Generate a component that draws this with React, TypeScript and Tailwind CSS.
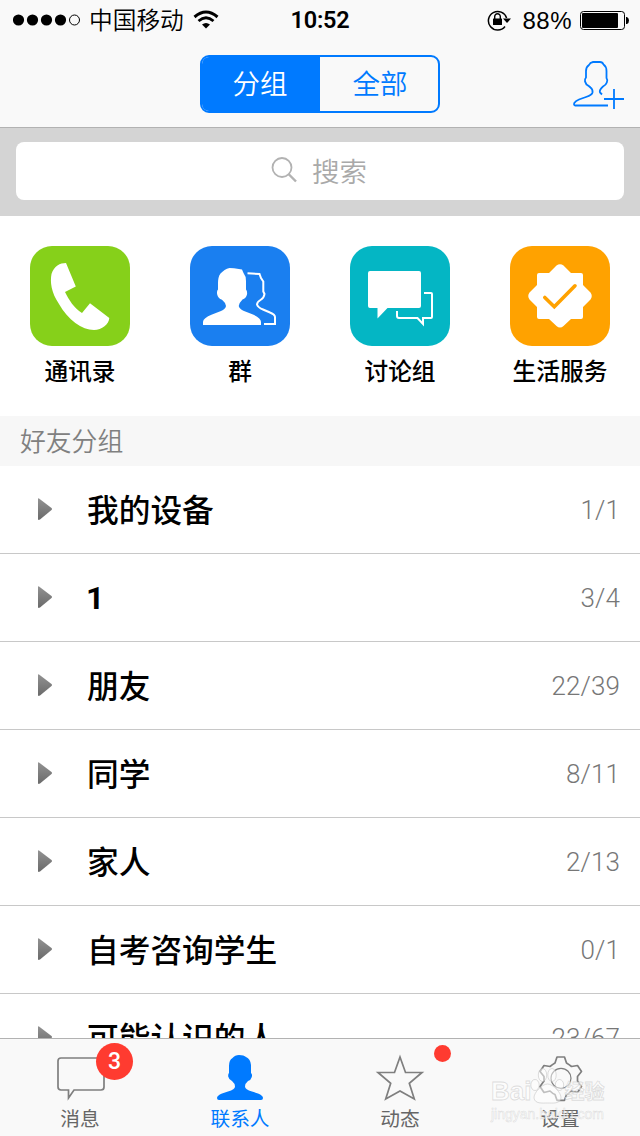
import React from "react";

const groups = [
  { name: "我的设备", count: "1/1" },
  { name: "1", count: "3/4" },
  { name: "朋友", count: "22/39" },
  { name: "同学", count: "8/11" },
  { name: "家人", count: "2/13" },
  { name: "自考咨询学生", count: "0/1" },
  { name: "可能认识的人", count: "23/67" },
];

function PhoneIcon() {
  return (
    <svg width="100" height="100" viewBox="0 0 100 100" fill="#fff">
      <path d="M36 17 L45.800 40.500 L35 46 C39 54 44 62 52 67 L60 57.300 L79.300 72 C79 78 72 84 64 84 C52 84 38 74 29 58 C21 46 20 36 21.500 28 C24 20 30 17 36 17Z" />
    </svg>
  );
}

function PeopleIcon() {
  return (
    <svg width="100" height="100" viewBox="0 0 100 100" fill="#fff">
      <path d="M52 23.500 L44 22.200 L39.500 22 C36 22.500 33 25 30.500 27.500 C28.500 30 28 34 28 37 V43.500 Q26.500 45 27.200 48.500 Q28 52.500 32 53.700 Q35.500 56.500 36 60 Q35.500 63 31 65 L22 68.500 Q13 72 13 76 V79 H71 V76 Q71 72 63 68.500 L54 65 Q49.500 63 48.700 60 Q49 57 52.500 53.500 Q56 52.500 57 48.500 Q57.500 45 56 43.500 V35 Q56 30 53.500 27Z" />
      <path
        d="M57.500 27.200 L69.500 28 L71 32 L73.300 35.500 V45.500 L74.500 48 Q74 52 70.500 54 Q67 56 67 58.500 Q68 61.500 73 63.500 L80 66.500 Q85 68.500 85 71 V78 H74"
        fill="none"
        stroke="#fff"
        strokeWidth="2"
      />
    </svg>
  );
}

function BubblesIcon() {
  return (
    <svg width="100" height="100" viewBox="0 0 100 100" fill="#fff">
      <path d="M20 25 H69 Q71 25 71 27 V60 Q71 62 69 62 H37.500 L27.500 72.500 V62 H20 Q18 62 18 60 V27 Q18 25 20 25Z" />
      <path
        d="M74 47 H81 Q82 47 82 48 V71 Q82 72 81 72 H73 V78 L67.500 72 H49 Q47 72 47 70 V65"
        fill="none"
        stroke="#fff"
        strokeWidth="2"
      />
    </svg>
  );
}

function BadgeCheckIcon() {
  return (
    <svg width="100" height="100" viewBox="0 0 100 100">
      <path
        d="M39 27 L46.500 19.500 Q50 17 53.500 19.500 L61 27 H71 Q73 27 73 29 V39 L80.500 46.500 Q83 50 80.500 53.500 L73 61 V71 Q73 73 71 73 H61 L53.500 80 Q50 83 46.500 80 L39 73 H29 Q27 73 27 71 V61 L19.500 53.500 Q17 50 19.500 46.500 L27 39 V29 Q27 27 29 27Z"
        fill="#fff"
      />
      <path d="M34.800 51.500 L44.300 60.700 L65 39.800" fill="none" stroke="#ffa200" strokeWidth="3.600" strokeLinecap="round" />
    </svg>
  );
}

const shortcuts = [
  { label: "通讯录", bg: "bg-[#86d01a]", icon: <PhoneIcon /> },
  { label: "群", bg: "bg-[#1a7ff0]", icon: <PeopleIcon /> },
  { label: "讨论组", bg: "bg-[#04b6c4]", icon: <BubblesIcon /> },
  { label: "生活服务", bg: "bg-[#ffa200]", icon: <BadgeCheckIcon /> },
];

function StatusBar() {
  return (
    <div className="grid h-10 grid-cols-[220px_1fr_220px] items-center text-[24px] leading-none text-black">
      <div className="flex items-center pl-[13px]">
        <svg className="shrink-0" width="68" height="12" viewBox="0 0 68 12">
          <circle cx="5.500" cy="6" r="5.600" />
          <circle cx="19.500" cy="6" r="5.600" />
          <circle cx="33.500" cy="6" r="5.600" />
          <circle cx="47.500" cy="6" r="5.600" />
          <circle cx="61.500" cy="6" r="5" fill="none" stroke="#000" strokeWidth="1" />
        </svg>
        <span className="ml-[8px] whitespace-nowrap pt-[4px] font-['Liberation_Sans','Noto_Sans_CJK_SC_DemiLight','Noto_Sans_CJK_SC',sans-serif] text-[23.700px] font-[350]">中国移动</span>
        <svg className="ml-[9px] shrink-0" width="26" height="20" viewBox="0 0 26 20" fill="none" stroke="#000">
          <path d="M1.500 7 Q13 -3 24.500 7" strokeWidth="3" />
          <path d="M5.500 11 Q13 4.500 20.500 11" strokeWidth="2.800" />
          <path d="M9 14.500 Q13 11.500 17 14.500 L13 18.500Z" fill="#000" stroke="none" />
        </svg>
      </div>
      <span className="pt-[2px] text-center font-['Roboto',sans-serif] text-[23.500px] font-semibold tracking-[-0.200px]">10:52</span>
      <div className="flex items-center justify-end pr-[11px]">
        <svg className="shrink-0" width="25" height="22" viewBox="0 0 25 22">
          <path d="M18 17.500 A9.300 9.300 0 1 1 19.600 9" fill="none" stroke="#000" strokeWidth="1.500" />
          <path d="M16 9.500 H24 L20 14Z" />
          <rect x="6" y="9.500" width="9" height="6.500" rx="0.500" />
          <path d="M7.700 10 V7.500 a2.800 2.800 0 0 1 5.600 0 V10" fill="none" stroke="#000" strokeWidth="1.400" />
        </svg>
        <span className="ml-[10px] pt-[2px] text-[24px] tracking-[0.500px]">88%</span>
        <svg className="ml-[8px] shrink-0" width="49" height="20" viewBox="0 0 49 20">
          <rect x="0.500" y="1.500" width="44" height="18" rx="3" fill="none" stroke="#000" />
          <rect x="2" y="3" width="36" height="15" rx="1" />
          <path d="M46 7 H47 Q49 8 49 10.500 Q49 13 47 14 H46Z" />
        </svg>
      </div>
    </div>
  );
}

export default function App() {
  return (
    <div className="flex h-[1136px] w-[640px] flex-col overflow-hidden bg-white font-['Liberation_Sans','Noto_Sans_CJK_SC',sans-serif]">
      <header className="h-[128px] shrink-0 border-b border-[#b2b2b2] bg-[#f9f9f9]">
        <StatusBar />
        <div className="grid grid-cols-[200px_240px_200px] pt-[15px]">
          <div />
          <div className="flex h-[58px] overflow-hidden rounded-[9px] border-2 border-[#007aff] bg-[#f9f9f9] font-['Liberation_Sans','Noto_Sans_CJK_SC_DemiLight','Noto_Sans_CJK_SC',sans-serif] text-[27.500px] font-[350] leading-[56px]">
            <button className="w-[118px] bg-[#007aff] pr-[2px] text-white">分组</button>
            <button className="flex-1 pl-[2px] text-[#007aff]">全部</button>
          </div>
          <svg className="ml-[132px] mt-[4px]" width="54" height="52" viewBox="0 0 54 52" fill="none" stroke="#007aff" strokeWidth="1.800">
            <path d="M36 46.500 H3 Q1.500 46 2.300 44 Q3.500 42 7 40.500 L14 38 Q20 36 20.500 33.500 Q21 30.500 18.500 28.500 Q17 27 14.500 25.500 L13 22.500 Q12.600 20 14 18.500 V12 Q14 8 17 6 Q18 3.500 21 3 H28 Q30.500 3 31.500 5.500 Q34.500 7.500 34.500 12 V19 Q36 21 34.800 23.500 Q34 26 31 27.500 Q27 31 28 33.500 L30 35.500" />
            <path d="M32 40 H52 M42 30 V50" />
          </svg>
        </div>
      </header>

      <div className="h-[88px] shrink-0 bg-[#d4d4d4] px-4 pt-[14px]">
        <div className="flex h-[58px] items-center justify-center rounded-[8px] bg-white pr-[2px] font-['Liberation_Sans','Noto_Sans_CJK_SC_DemiLight','Noto_Sans_CJK_SC',sans-serif] text-[27.500px] font-[350] leading-none text-[#a9a9a9]">
          <svg className="-mt-[2px]" width="26" height="26" viewBox="0 0 26 26" fill="none" stroke="#b2b2b2" strokeWidth="1.800">
            <circle cx="11" cy="10.500" r="9.500" />
            <path d="M17.500 17 L25 24.500" strokeWidth="2.400" />
          </svg>
          <span className="ml-[15px] pt-[4px]">搜索</span>
        </div>
      </div>

      <div className="grid h-[200px] shrink-0 grid-cols-4 pt-[30px]">
        {shortcuts.map((s) => (
          <div key={s.label} className="flex flex-col items-center">
            <div className={`h-[100px] w-[100px] rounded-[22px] ${s.bg}`}>{s.icon}</div>
            <span className="mt-[13px] text-[23.700px] font-medium leading-[26px] text-black">{s.label}</span>
          </div>
        ))}
      </div>

      <div className="h-[50px] shrink-0 bg-[#f7f7f7] pl-[20px] font-['Liberation_Sans','Noto_Sans_CJK_SC_DemiLight','Noto_Sans_CJK_SC',sans-serif] text-[25.800px] font-[350] leading-[52px] text-[#808080]">好友分组</div>

      <main className="min-h-0 flex-1 overflow-hidden">
        {groups.map((g) => (
          <div key={g.name} className="flex h-[88px] items-center border-b border-[#c8c8c8] pl-[38px] pr-[20px]">
            <svg className="-mt-[2px]" width="15" height="22" viewBox="0 0 15 22">
              <defs>
                <linearGradient id="arrow" x1="0" y1="0" x2="0" y2="1">
                  <stop offset="0" stopColor="#929292" />
                  <stop offset="1" stopColor="#6a6a6a" />
                </linearGradient>
              </defs>
              <path d="M0 1 Q0 0 1 0.500 L13.500 10 Q14.500 11 13.500 12 L2 21.500 Q0 22.500 0 21Z" fill="url(#arrow)" />
            </svg>
            {g.name === "1" ? (
              <span className="ml-[33px] flex-1 font-['Roboto',sans-serif] text-[32px] font-bold leading-[40px] text-black">1</span>
            ) : (
              <span className="ml-[34px] flex-1 pt-[2px] text-[31.700px] font-medium leading-[40px] text-black">{g.name}</span>
            )}
            <span className="font-['Roboto',sans-serif] text-[26px] font-light leading-[30px] tracking-[0.100px] text-[#777]">{g.count}</span>
          </div>
        ))}
      </main>

      <nav className="relative grid h-[98px] shrink-0 grid-cols-4 border-t border-[#b2b2b2] bg-[#f9f9f9] text-[19.700px] leading-[24px] text-[#666]">
        <div className="relative flex flex-col items-center pt-[10px]">
          <svg width="60" height="56" viewBox="0 0 60 56" fill="none" stroke="#7f7f7f" strokeWidth="1.700">
            <path d="M11 9 H51 Q54 9 54 12 V38 Q54 41 51 41 H24 L18.500 49 V41 H11 Q8 41 8 38 V12 Q8 9 11 9Z" />
          </svg>
          <span className="mt-[2px]">消息</span>
          <span className="absolute left-[96px] top-[4px] h-[37px] w-[37px] rounded-full bg-[#ff3b30] text-center font-['Roboto',sans-serif] text-[23px] font-medium leading-[38px] text-white">3</span>
        </div>
        <div className="flex flex-col items-center pt-[10px] text-[#007aff]">
          <svg width="60" height="56" viewBox="0 0 60 56" fill="currentColor">
            <path d="M9 51 Q7 51 7 49 Q7 46.500 12 44.500 L18 42.500 Q25 40.500 25 37.500 Q25 34.500 22 32 Q19 31 18.200 27.500 Q18 25 19 24 V17 Q19 11 22.500 9 Q25 6 29 6 Q34 6 36 8 Q40.500 10 41 16 V24 Q42.500 25 41.800 28 Q41 31 38 32 Q35 34.500 35 37.500 Q35 40.500 42 42.500 L48 44.500 Q53 46.500 53 49 Q53 51 51 51Z" />
          </svg>
          <span className="mt-[2px]">联系人</span>
        </div>
        <div className="relative flex flex-col items-center pt-[10px]">
          <svg width="60" height="56" viewBox="0 0 60 56" fill="none" stroke="#7f7f7f" strokeWidth="1.700">
            <path d="M30 8 L35.500 23.500 H52 L39.300 34.300 L44.300 50 L30 42 L15.700 50 L20.700 34.300 L8 23.500 H24.500Z" />
          </svg>
          <span className="mt-[2px]">动态</span>
          <span className="absolute left-[113.500px] top-[6px] h-[17px] w-[17px] rounded-full bg-[#ff3b30]" />
        </div>
        <div className="flex flex-col items-center pt-[10px]">
          <svg width="60" height="56" viewBox="0 0 60 56" fill="none" stroke="#7f7f7f" strokeWidth="1.700">
            <path d="M27 8 H34.500 L36.500 14 Q39 15.500 41.500 17.500 L47.500 16.500 L51.500 22.500 L47.500 27.500 V32 L51.500 37.500 L47.500 43.500 L41.500 42 Q39 44.500 36.500 45.500 L34.500 51.300 H27 L25 45.500 Q22.500 44.500 20 42 L14 43.500 L10 37.500 L14 32 V27.500 L10 22.500 L14 16.500 L20 17.500 Q22.500 15.500 25 14Z" strokeLinejoin="round" />
            <circle cx="31" cy="29.300" r="10" strokeWidth="1.200" />
          </svg>
          <span className="mt-[2px]">设置</span>
        </div>
        <div className="pointer-events-none absolute left-[491px] top-[28px] flex h-[60px] w-[120px] flex-col leading-none text-white/60">
          <div className="flex h-[38px] items-end whitespace-nowrap [-webkit-text-stroke:0.800px_rgba(190,190,190,0.500)]">
            <span className="text-[26px] font-bold leading-[28px]">Bai</span>
            <svg width="36" height="38" viewBox="0 0 36 38" className="-ml-[1px] shrink-0 fill-white/50 stroke-[#bbb]/50">
              <ellipse cx="5" cy="18" rx="4.200" ry="5.500" />
              <ellipse cx="12.500" cy="8" rx="4.200" ry="6.500" />
              <ellipse cx="22" cy="8" rx="4.200" ry="6.500" />
              <ellipse cx="29.500" cy="18" rx="4.200" ry="5.500" />
              <path d="M17.500 17 C23 17 31.500 26 31 31 C30 37 23 36 17.500 36 C12 36 5 37 4 31 C3.500 26 12 17 17.500 17Z" />
            </svg>
            <span className="-ml-[2px] text-[20px] font-bold leading-[26px]">经验</span>
          </div>
          <span className="mt-[2px] text-[14px] [-webkit-text-stroke:0.500px_rgba(190,190,190,0.500)]">jingyan.baidu.com</span>
        </div>
      </nav>
    </div>
  );
}
